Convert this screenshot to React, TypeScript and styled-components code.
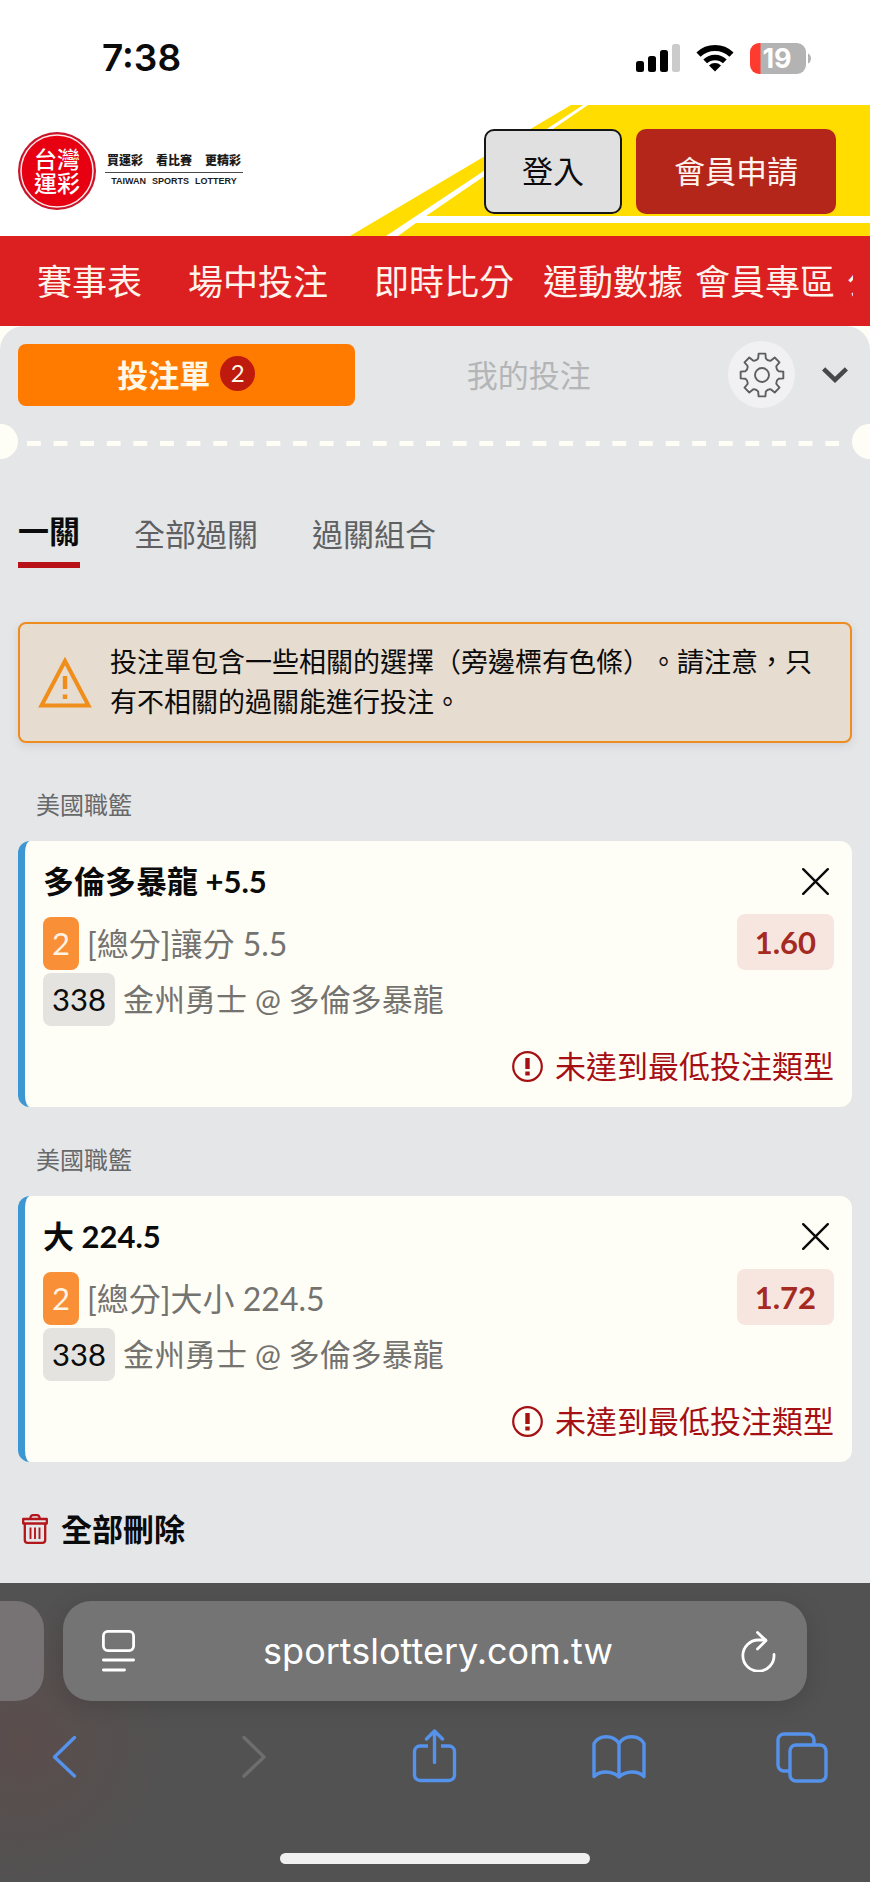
import React from "react";
import styled, { createGlobalStyle } from "styled-components";

const GlobalStyle = createGlobalStyle`
  * { box-sizing: border-box; }
  body {
    margin: 0;
    background: #ffffff;
    font-family: Lato, "Noto Sans CJK TC", sans-serif;
    font-size: 31px;
    color: #0b0b0b;
  }
  button {
    margin: 0;
    padding: 0;
    border: 0;
    background: none;
    font: inherit;
    color: inherit;
    cursor: pointer;
  }
  h2, p, ul { margin: 0; padding: 0; font-weight: 400; }
  svg { display: block; flex: none; }
`;

const Page = styled.div`
  display: flex;
  flex-direction: column;
  min-height: 100vh;
  overflow: hidden;
`;

/* ---------- status bar ---------- */

const StatusBar = styled.div`
  display: flex;
  align-items: center;
  height: 104px;
  padding: 12px 59px 0 102px;
  font-family: Inter, "Liberation Sans", sans-serif;
`;

const Clock = styled.time`
  margin-right: auto;
  font-size: 37px;
  font-weight: 600;
  line-height: 44px;
`;

const StatusIcons = styled.div`
  display: flex;
  align-items: center;
  gap: 16px;
`;

/* ---------- site header ---------- */

const Header = styled.header`
  position: relative;
  display: flex;
  align-items: center;
  gap: 14px;
  height: 132px;
  padding: 2px 34px 0 18px;
  background: #ffffff;
`;

const Stripes = styled.svg`
  position: absolute;
  right: 0;
  bottom: 0;
`;

const Brand = styled.a`
  display: flex;
  align-items: center;
  gap: 9px;
  margin-right: auto;
  color: #1b1b1b;
  text-decoration: none;
`;

const BrandText = styled.span`
  display: flex;
  flex-direction: column;
`;

const Slogan = styled.span`
  display: flex;
  justify-content: center;
  gap: 13px;
  padding: 0 2px 3px;
  border-bottom: 1px solid #4a4a4a;
  font-size: 12px;
  font-weight: 900;
  line-height: 16px;
`;

const SloganEn = styled.span`
  display: flex;
  justify-content: center;
  gap: 6px;
  font-family: "Liberation Sans", Arial, sans-serif;
  font-size: 9px;
  font-weight: 700;
  line-height: 16px;
`;

const HeaderButton = styled.button<{ $primary?: boolean }>`
  position: relative;
  height: 85px;
  padding: 0 36px;
  border: 2px solid ${(p) => (p.$primary ? "#b5261a" : "#161616")};
  border-radius: 10px;
  background: ${(p) => (p.$primary ? "#b5261a" : "#e0e0e0")};
  color: ${(p) => (p.$primary ? "#fff4ee" : "#0b0b0b")};
  line-height: 44px;
`;

const Nav = styled.nav`
  height: 90px;
  padding: 0 17px 0 14px;
  background: #dc1f21;
`;

const NavList = styled.ul`
  display: flex;
  overflow: hidden;
  list-style: none;
`;

const NavLink = styled.a<{ $compact?: boolean }>`
  display: block;
  padding: 0 ${(p) => (p.$compact ? "6px" : "23px")};
  color: #fff3ec;
  font-size: 35px;
  line-height: 90px;
  white-space: nowrap;
  text-decoration: none;
`;

/* ---------- bet slip ---------- */

const Backdrop = styled.main`
  flex: 1;
  display: flex;
  background: #fffef6;
`;

const Slip = styled.section`
  flex: 1;
  min-width: 0;
  padding: 15px 0 32px;
  border-radius: 24px 24px 0 0;
  background: #e4e6e8;
`;

const SlipHead = styled.div`
  display: flex;
  align-items: center;
  padding: 0 22px 0 18px;
`;

const SlipTabs = styled.div`
  flex: 1;
  display: flex;
  gap: 6px;
  margin-right: 31px;
`;

const SlipTab = styled.button<{ $active?: boolean }>`
  flex: 1;
  display: flex;
  align-items: center;
  justify-content: center;
  gap: 10px;
  height: 62px;
  padding-bottom: 3px;
  border-radius: 8px;
  background: ${(p) => (p.$active ? "#ff7b00" : "transparent")};
  color: ${(p) => (p.$active ? "#fff8e8" : "#b4b5b7")};
  font-weight: ${(p) => (p.$active ? 700 : 400)};
`;

const CountBadge = styled.span`
  width: 35px;
  height: 35px;
  border-radius: 50%;
  background: #bf1a0e;
  font-size: 24px;
  font-weight: 400;
  line-height: 34px;
  text-align: center;
`;

const GearButton = styled.button`
  display: flex;
  align-items: center;
  justify-content: center;
  width: 67px;
  height: 67px;
  margin-right: 27px;
  border-radius: 50%;
  background: #f1f1f4;
`;

const Tear = styled.div`
  display: flex;
  align-items: center;
  height: 35px;
  margin-top: 16px;
`;

const Notch = styled.span<{ $right?: boolean }>`
  width: 18px;
  height: 35px;
  border-radius: ${(p) => (p.$right ? "18px 0 0 18px" : "0 18px 18px 0")};
  background: #fffef6;
`;

const Dashes = styled.span`
  flex: 1;
  height: 5px;
  margin: 4px 0 0 9px;
  background: linear-gradient(90deg, #fffef6 50%, transparent 50%) 0 0 / 27px 5px round;
`;

const ModeTabs = styled.div`
  display: flex;
  align-items: flex-start;
  gap: 54px;
  padding: 51px 18px 0;
`;

const ModeTab = styled.button<{ $active?: boolean }>`
  padding: ${(p) => (p.$active ? "0 0 10px" : "3px 0 0")};
  border-bottom: ${(p) => (p.$active ? "6px solid #b91118" : "0")};
  color: ${(p) => (p.$active ? "#0b0b0b" : "#5f6062")};
  font-weight: ${(p) => (p.$active ? 700 : 400)};
  line-height: 42px;
`;

const Alert = styled.div`
  display: flex;
  align-items: center;
  gap: 18px;
  margin: 54px 18px 44px;
  padding: 18px 18px 19px;
  border: 2px solid #ee8c1f;
  border-radius: 8px;
  background: #e6dcd0;
  box-shadow: 0 3px 8px rgba(60, 60, 70, 0.12);
`;

const AlertText = styled.p`
  font-size: 27px;
  line-height: 40px;
  text-spacing-trim: space-all;
`;

const League = styled.h2`
  margin: 35px 18px 18px 36px;
  color: #67686a;
  font-size: 24px;
  line-height: 36px;
`;

const Card = styled.article`
  margin: 0 18px;
  padding: 18px 18px 19px;
  border-left: 7px solid #3d97d3;
  border-radius: 12px;
  background: #fffef6;
`;

const Row = styled.div`
  display: flex;
  align-items: center;
`;

const PickName = styled.strong`
  flex: 1;
  font-weight: 700;
  line-height: 44px;
`;

const CloseButton = styled.button`
  display: flex;
  align-items: center;
  justify-content: center;
  width: 37px;
  height: 44px;
`;

const MarketRow = styled(Row)`
  align-items: flex-end;
  margin: 11px 0 3px;
`;

const Chip = styled.span<{ $accent?: boolean }>`
  height: 53px;
  margin-right: 8px;
  padding: 0 9px;
  border-radius: 8px;
  background: ${(p) => (p.$accent ? "#f98f36" : "#e5e3df")};
  color: ${(p) => (p.$accent ? "#fff4e4" : "#0b0b0b")};
  line-height: 53px;
`;

const Market = styled.span`
  flex: 1;
  color: #747370;
  font-size: 32px;
  line-height: 53px;
`;

const Match = styled.span`
  color: #747370;
  line-height: 53px;
`;

const Odds = styled.span`
  height: 56px;
  padding: 0 18px;
  border-radius: 8px;
  background: #f7e6df;
  color: #a52a22;
  font-weight: 700;
  line-height: 56px;
`;

const Warning = styled(Row)`
  justify-content: flex-end;
  gap: 12px;
  margin-top: 18px;
  color: #a60f14;
  line-height: 44px;
`;

const ClearButton = styled.button`
  display: flex;
  align-items: center;
  gap: 13px;
  margin: 45px 22px 0;
  font-weight: 700;
  line-height: 44px;
`;

/* ---------- browser toolbar ---------- */

const BrowserBar = styled.footer`
  padding: 18px 0;
  background:
    radial-gradient(circle at 24px 160px, rgba(120, 60, 55, 0.22), transparent 150px),
    #525252;
`;

const AddressRow = styled.div`
  display: flex;
  gap: 19px;
  padding-right: 63px;
`;

const PreviousPage = styled.div`
  width: 44px;
  border-radius: 0 28px 28px 0;
  background: #777273;
`;

const AddressBar = styled.form`
  flex: 1;
  display: flex;
  align-items: center;
  height: 100px;
  padding: 0 31px 0 39px;
  border-radius: 28px;
  background: #747474;
  color: #ffffff;
  box-shadow: 0 4px 24px rgba(0, 0, 0, 0.14);
`;

const AddressInput = styled.input`
  flex: 1;
  min-width: 0;
  padding: 0;
  border: 0;
  outline: 0;
  background: transparent;
  color: inherit;
  font-family: Inter, "Liberation Sans", sans-serif;
  font-size: 36px;
  line-height: 44px;
  text-align: center;
`;

const Tools = styled.div`
  display: flex;
  justify-content: space-between;
  margin-top: 28px;
  padding: 0 40px 0 38px;
`;

const ToolButton = styled.button`
  color: #5592ec;
  &:disabled { color: #6e6e6e; cursor: default; }
`;

const HomeIndicator = styled.div`
  width: 310px;
  height: 11px;
  margin: 70px auto 0;
  border-radius: 6px;
  background: #f0f0f0;
`;

/* ---------- icons ---------- */

const SignalIcon = () => (
  <svg width="44" height="28" viewBox="0 0 44 28" aria-hidden="true">
    <rect x="0" y="17" width="8" height="11" rx="2.5" />
    <rect x="12" y="12" width="8" height="16" rx="2.5" />
    <rect x="24" y="6" width="8" height="22" rx="2.5" />
    <rect x="36" y="0" width="8" height="28" rx="2.5" fill="#cbcbcb" />
  </svg>
);

const WifiIcon = () => (
  <svg width="38" height="28" viewBox="0 0 38 28" aria-hidden="true">
    <path d="M2.5 10.6a24 24 0 0 1 33 0" fill="none" stroke="#000" strokeWidth="6" />
    <path d="M9.2 17.4a14.2 14.2 0 0 1 19.6 0" fill="none" stroke="#000" strokeWidth="5.4" />
    <path d="M13 21.5a8.6 8.6 0 0 1 12 0L19 27.6Z" />
  </svg>
);

const BatteryIcon = () => (
  <svg width="61" height="31" viewBox="0 0 61 31" role="img" aria-label="19%">
    <path d="M9 0H47a9 9 0 0 1 9 9V22a9 9 0 0 1-9 9H9Z" fill="#b3b3b3" />
    <path d="M10.5 0H9a9 9 0 0 0-9 9V22a9 9 0 0 0 9 9h1.5Z" fill="#ff3b30" />
    <path d="M58 10.5c4 1.5 4 8.500 0 10Z" fill="#b3b3b3" />
    <text x="27" y="25" textAnchor="middle" fill="#fff" fontSize="27" fontWeight="700">19</text>
  </svg>
);

const HeaderStripes = () => (
  <Stripes width="520" height="131" viewBox="0 0 520 131" aria-hidden="true">
    <path d="M221 0H520V131H0Z" fill="#ffdd00" />
    <path d="M233 0h5L76 111H520v7H66L48 131H36Z" fill="#ffffff" />
  </Stripes>
);

const LogoMark = () => (
  <svg width="78" height="78" viewBox="0 0 78 78" role="img" aria-label="台灣運彩">
    <circle cx="39" cy="39" r="39" fill="#c9142a" />
    <circle cx="39" cy="39" r="36" fill="#e60012" stroke="#ffe9e9" strokeWidth="1.5" />
    <text fill="#ffffff" fontSize="23" fontWeight="500" textAnchor="middle">
      <tspan x="39" y="36">台灣</tspan>
      <tspan x="39" y="60">運彩</tspan>
    </text>
  </svg>
);

const gearOutline = Array.from({ length: 8 }, (_, i) => {
  const at = (radius: number, degrees: number) => {
    const angle = ((i * 45 + degrees - 90) * Math.PI) / 180;
    return `${(23 + radius * Math.cos(angle)).toFixed(2)} ${(23 + radius * Math.sin(angle)).toFixed(2)}`;
  };
  return `${i ? "L" : "M"}${at(17, -13)}L${at(21.6, -9)}L${at(21.6, 9)}L${at(17, 13)}Q${at(15, 22.5)} ${at(17, 32)}`;
}).join("");

const GearIcon = () => (
  <svg width="46" height="46" viewBox="0 0 46 46" fill="none" stroke="#5d5e61" strokeWidth="1.9" strokeLinejoin="round" aria-hidden="true">
    <path d={gearOutline + "Z"} />
    <circle cx="23" cy="23" r="7" />
  </svg>
);

const ChevronIcon = () => (
  <svg width="26" height="16" viewBox="0 0 26 16" fill="none" stroke="#47484a" strokeWidth="4.5" aria-hidden="true">
    <path d="M1.6 1.8 13 12.8 24.4 1.8" />
  </svg>
);

const AlertIcon = () => (
  <svg width="54" height="51" viewBox="0 0 54 51" fill="none" stroke="#f08e1c" aria-hidden="true">
    <path d="M27 4 50.5 48.5H3.5Z" strokeWidth="4" />
    <path d="M27 19V32M27 37.5V42" strokeWidth="4.400" />
  </svg>
);

const CloseIcon = () => (
  <svg width="27" height="27" viewBox="0 0 27 27" fill="none" stroke="#0b0b0b" strokeWidth="2.4" strokeLinecap="round" aria-hidden="true">
    <path d="M1.2 1.2 25.8 25.8M25.8 1.2 1.2 25.8" />
  </svg>
);

const WarningIcon = () => (
  <svg width="31" height="31" viewBox="0 0 31 31" fill="none" stroke="currentColor" aria-hidden="true">
    <circle cx="15.5" cy="15.5" r="14.3" strokeWidth="2.2" />
    <path d="M15.5 7V18M15.5 20.5V24.5" strokeWidth="4.4" />
  </svg>
);

const TrashIcon = () => (
  <svg width="26" height="30" viewBox="0 0 26 30" fill="none" stroke="#b3161b" strokeWidth="2.3" strokeLinejoin="round" aria-hidden="true">
    <path d="M2.800 9.500V26a2.800 2.800 0 0 0 2.800 2.800H20.400a2.800 2.800 0 0 0 2.800-2.800V9.500" />
    <path d="M1.200 5H24.800V9.500H1.200Z" />
    <path d="M8.500 5V3.600A2.400 2.400 0 0 1 11 1.200h4a2.400 2.400 0 0 1 2.500 2.400V5" />
    <path d="M8.500 13.500V25M13 13.500V25M17.500 13.500V25" strokeWidth="1.9" />
  </svg>
);

const ReaderIcon = () => (
  <svg width="33" height="42" viewBox="0 0 33 42" fill="none" stroke="currentColor" strokeWidth="2.8" strokeLinecap="round" aria-hidden="true">
    <rect x="1.4" y="1.4" width="30.2" height="19.2" rx="4.5" />
    <path d="M1.4 30H31.6M1.4 40H22.5" />
  </svg>
);

const ReloadIcon = () => (
  <svg width="35" height="41" viewBox="0 0 35 41" fill="none" stroke="currentColor" strokeWidth="2.8" strokeLinecap="round" strokeLinejoin="round" aria-hidden="true">
    <path d="M33 23.500A15.600 15.600 0 1 1 17.400 9H24.500" />
    <path d="M16.500 1.500 25 9.600 16.500 18" />
  </svg>
);

const ToolIcon = ({ children }: { children: React.ReactNode }) => (
  <svg width="54" height="54" viewBox="0 0 54 54" fill="none" stroke="currentColor" strokeWidth="3.4" strokeLinecap="round" strokeLinejoin="round" aria-hidden="true">
    {children}
  </svg>
);

/* ---------- data ---------- */

const navItems = [
  { label: "賽事表" },
  { label: "場中投注" },
  { label: "即時比分" },
  { label: "運動數據", compact: true },
  { label: "會員專區", compact: true },
  { label: "公告", compact: true },
];

const picks = [
  { league: "美國職籃", name: "多倫多暴龍 +5.5", market: "[總分]讓分 5.5", odds: "1.60" },
  { league: "美國職籃", name: "大 224.5", market: "[總分]大小 224.5", odds: "1.72" },
];

export default function App() {
  return (
    <Page lang="zh-TW">
      <GlobalStyle />
      <StatusBar>
        <Clock>7:38</Clock>
        <StatusIcons>
          <SignalIcon />
          <WifiIcon />
          <BatteryIcon />
        </StatusIcons>
      </StatusBar>

      <Header>
        <HeaderStripes />
        <Brand href="#">
          <LogoMark />
          <BrandText>
            <Slogan>
              <span>買運彩</span>
              <span>看比賽</span>
              <span>更精彩</span>
            </Slogan>
            <SloganEn>
              <span>TAIWAN</span>
              <span>SPORTS</span>
              <span>LOTTERY</span>
            </SloganEn>
          </BrandText>
        </Brand>
        <HeaderButton>登入</HeaderButton>
        <HeaderButton $primary>會員申請</HeaderButton>
      </Header>

      <Nav>
        <NavList>
          {navItems.map((item) => (
            <li key={item.label}>
              <NavLink href="#" $compact={item.compact}>{item.label}</NavLink>
            </li>
          ))}
        </NavList>
      </Nav>

      <Backdrop>
        <Slip>
          <SlipHead>
            <SlipTabs>
              <SlipTab $active>
                投注單<CountBadge>2</CountBadge>
              </SlipTab>
              <SlipTab>我的投注</SlipTab>
            </SlipTabs>
            <GearButton aria-label="設定"><GearIcon /></GearButton>
            <button aria-label="收合"><ChevronIcon /></button>
          </SlipHead>

          <Tear>
            <Notch />
            <Dashes />
            <Notch $right />
          </Tear>

          <ModeTabs>
            <ModeTab $active>一關</ModeTab>
            <ModeTab>全部過關</ModeTab>
            <ModeTab>過關組合</ModeTab>
          </ModeTabs>

          <Alert role="alert">
            <AlertIcon />
            <AlertText>投注單包含一些相關的選擇（旁邊標有色條）。請注意，只有不相關的過關能進行投注。</AlertText>
          </Alert>

          {picks.map((pick) => (
            <React.Fragment key={pick.name}>
              <League>{pick.league}</League>
              <Card>
                <Row>
                  <PickName>{pick.name}</PickName>
                  <CloseButton aria-label="移除"><CloseIcon /></CloseButton>
                </Row>
                <MarketRow>
                  <Chip $accent>2</Chip>
                  <Market>{pick.market}</Market>
                  <Odds>{pick.odds}</Odds>
                </MarketRow>
                <Row>
                  <Chip>338</Chip>
                  <Match>金州勇士 @ 多倫多暴龍</Match>
                </Row>
                <Warning>
                  <WarningIcon />
                  未達到最低投注類型
                </Warning>
              </Card>
            </React.Fragment>
          ))}

          <ClearButton>
            <TrashIcon />
            全部刪除
          </ClearButton>
        </Slip>
      </Backdrop>

      <BrowserBar>
        <AddressRow>
          <PreviousPage />
          <AddressBar onSubmit={(event) => event.preventDefault()}>
            <button type="button" aria-label="閱讀器"><ReaderIcon /></button>
            <AddressInput aria-label="網址" defaultValue="sportslottery.com.tw" />
            <button type="submit" aria-label="重新載入"><ReloadIcon /></button>
          </AddressBar>
        </AddressRow>
        <Tools>
          <ToolButton aria-label="上一頁">
            <ToolIcon><path d="M36.5 8.5 16.5 28 36.5 47" /></ToolIcon>
          </ToolButton>
          <ToolButton aria-label="下一頁" disabled>
            <ToolIcon><path d="M21 8.5 41 28 21 47" /></ToolIcon>
          </ToolButton>
          <ToolButton aria-label="分享">
            <ToolIcon>
              <path d="M21 17H13a5.500 5.500 0 0 0-5.500 5.500V46a5.500 5.500 0 0 0 5.500 5.500H42a5.500 5.500 0 0 0 5.500-5.500V22.500A5.500 5.500 0 0 0 42 17H34" strokeLinecap="butt" />
              <path d="M27.5 33.5V2M19.5 10 27.5 2 35.5 10" />
            </ToolIcon>
          </ToolButton>
          <ToolButton aria-label="書籤">
            <ToolIcon>
              <path d="M27 48V14.500C21.500 5.500 7 5.500 2 14.500V47.500C8 41.500 20 41.500 27 48 34 41.500 46 41.500 52 47.500V14.500C47 5.500 32.500 5.500 27 14.500" />
            </ToolIcon>
          </ToolButton>
          <ToolButton aria-label="分頁">
            <ToolIcon>
              <rect x="14" y="16" width="36" height="36" rx="6" />
              <path d="M13 42H8a6 6 0 0 1-6-6V11a6 6 0 0 1 6-6H32a6 6 0 0 1 6 6v4" />
            </ToolIcon>
          </ToolButton>
        </Tools>
        <HomeIndicator />
      </BrowserBar>
    </Page>
  );
}
